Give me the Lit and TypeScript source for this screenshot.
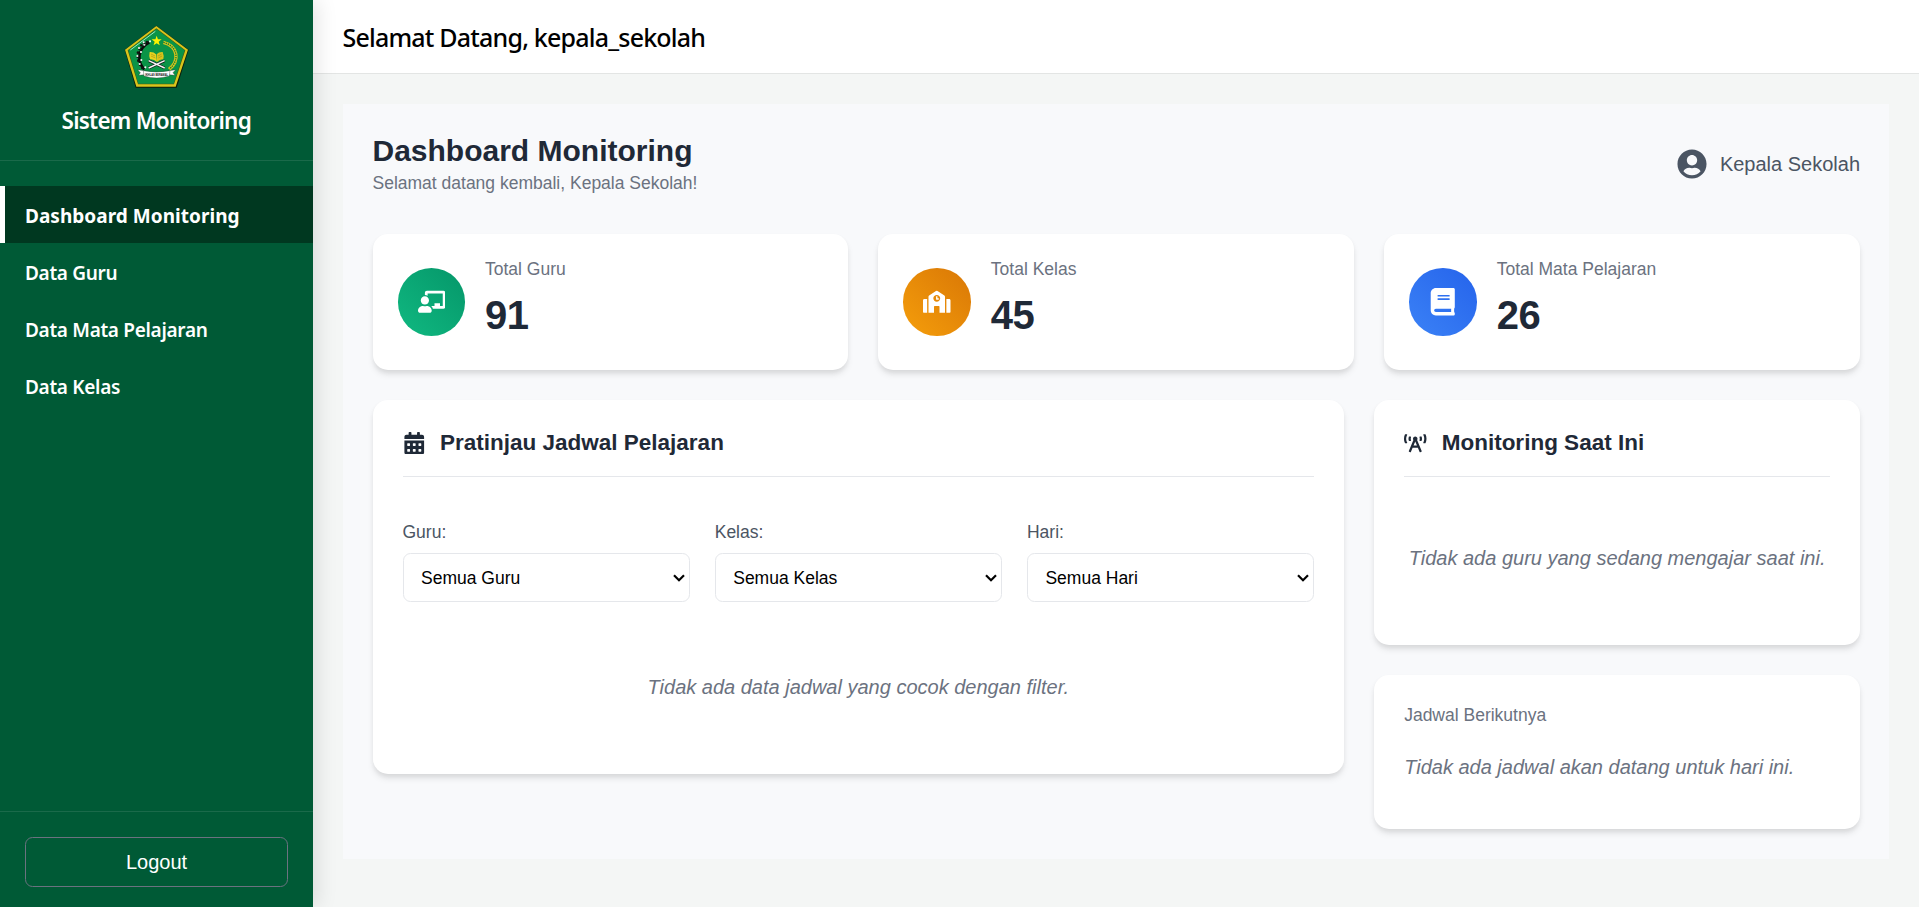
import { LitElement, html, css, svg } from "lit";
import { customElement, state } from "lit/decorators.js";

const ICONS = {
  teacher: {
    box: "0 0 640 512",
    d: "M208 352c-2.39 0-4.78.35-7.06 1.09C187.98 357.3 174.35 360 160 360c-14.35 0-27.98-2.7-40.95-6.91-2.28-.74-4.66-1.09-7.05-1.09C49.94 352-.33 402.48 0 464.62.14 490.88 21.73 512 48 512h224c26.27 0 47.86-21.12 48-47.38.33-62.14-49.94-112.62-112-112.62zm-48-32c53.02 0 96-42.98 96-96s-42.98-96-96-96-96 42.98-96 96 42.98 96 96 96zM592 0H208c-26.47 0-48 22.25-48 49.59V96c23.42 0 45.1 6.78 64 17.8V64h352v288h-64v-64H384v64h-76.24c19.1 16.69 33.12 38.73 39.69 64H592c26.47 0 48-22.25 48-49.59V49.59C640 22.25 618.47 0 592 0z",
  },
  school: {
    box: "0 0 640 512",
    d: "M0 224v272c0 8.84 7.16 16 16 16h80V192H32c-17.67 0-32 14.33-32 32zm360-48h-24v-40c0-4.42-3.58-8-8-8h-16c-4.42 0-8 3.58-8 8v64c0 4.42 3.58 8 8 8h48c4.42 0 8-3.58 8-8v-16c0-4.42-3.58-8-8-8zm137.75-63.96l-160-106.67a32.02 32.02 0 0 0-35.5 0l-160 106.67A32.002 32.002 0 0 0 128 138.66V512h128V368c0-8.84 7.16-16 16-16h96c8.84 0 16 7.16 16 16v144h128V138.67c0-10.7-5.35-20.7-14.25-26.63zM320 256c-44.18 0-80-35.82-80-80s35.82-80 80-80 80 35.82 80 80-35.82 80-80 80zm288-64h-64v320h80c8.84 0 16-7.16 16-16V224c0-17.67-14.33-32-32-32z",
  },
  book: {
    box: "0 0 448 512",
    d: "M448 360V24c0-13.3-10.7-24-24-24H96C43 0 0 43 0 96v320c0 53 43 96 96 96h328c13.3 0 24-10.7 24-24v-16c0-7.5-3.5-14.3-8.9-18.7-4.2-15.4-4.2-59.3 0-74.7 5.4-4.3 8.9-11.1 8.9-18.6zM128 134c0-3.3 2.7-6 6-6h212c3.3 0 6 2.7 6 6v20c0 3.3-2.7 6-6 6H134c-3.3 0-6-2.7-6-6v-20zm0 64c0-3.3 2.7-6 6-6h212c3.3 0 6 2.7 6 6v20c0 3.3-2.7 6-6 6H134c-3.3 0-6-2.7-6-6v-20zm253.4 250H96c-17.7 0-32-14.3-32-32 0-17.6 14.4-32 32-32h285.4c-1.9 17.1-1.9 46.9 0 64z",
  },
  calendar: {
    box: "0 0 448 512",
    d: "M0 464c0 26.5 21.5 48 48 48h352c26.5 0 48-21.5 48-48V192H0v272zm320-196c0-6.6 5.4-12 12-12h40c6.6 0 12 5.4 12 12v40c0 6.6-5.4 12-12 12h-40c-6.6 0-12-5.4-12-12v-40zm0 128c0-6.6 5.4-12 12-12h40c6.6 0 12 5.4 12 12v40c0 6.6-5.4 12-12 12h-40c-6.6 0-12-5.4-12-12v-40zM192 268c0-6.6 5.4-12 12-12h40c6.6 0 12 5.4 12 12v40c0 6.6-5.4 12-12 12h-40c-6.6 0-12-5.4-12-12v-40zm0 128c0-6.6 5.4-12 12-12h40c6.6 0 12 5.4 12 12v40c0 6.6-5.4 12-12 12h-40c-6.6 0-12-5.4-12-12v-40zM64 268c0-6.6 5.4-12 12-12h40c6.6 0 12 5.4 12 12v40c0 6.6-5.4 12-12 12H76c-6.6 0-12-5.4-12-12v-40zm0 128c0-6.6 5.4-12 12-12h40c6.6 0 12 5.4 12 12v40c0 6.6-5.4 12-12 12H76c-6.6 0-12-5.4-12-12v-40zM400 64h-48V16c0-8.8-7.2-16-16-16h-32c-8.8 0-16 7.2-16 16v48H160V16c0-8.8-7.2-16-16-16h-32c-8.8 0-16 7.2-16 16v48H48C21.5 64 0 85.5 0 112v48h448v-48c0-26.5-21.5-48-48-48z",
  },
  tower: {
    box: "0 0 640 512",
    d: "M150.94 192h33.73c11.01 0 18.61-10.83 14.86-21.18-4.93-13.58-7.55-27.98-7.55-42.82s2.62-29.24 7.55-42.82C203.29 74.83 195.68 64 184.67 64h-33.73c-7.01 0-13.46 4.49-15.41 11.23C130.64 92.21 128 109.88 128 128c0 18.12 2.64 35.79 7.54 52.76 1.94 6.74 8.39 11.24 15.4 11.24zM89.92 23.34C95.56 12.72 87.97 0 75.96 0H40.63c-6.27 0-12.14 3.59-14.74 9.31C9.4 45.54 0 85.65 0 128c0 24.75 3.12 68.33 26.69 118.86 2.62 5.63 8.42 9.14 14.61 9.14h34.84c12.02 0 19.61-12.74 13.95-23.37-49.78-93.32-16.71-178.15-.17-209.29zM614.06 9.29C611.46 3.58 605.6 0 599.33 0h-35.42c-11.98 0-19.66 12.66-14.02 23.25 18.27 34.29 48.42 119.42.28 209.23-5.72 10.68 1.8 23.52 13.91 23.52h35.23c6.27 0 12.13-3.58 14.73-9.29C630.57 210.48 640 170.36 640 128s-9.42-82.48-25.94-118.71zM489.06 64h-33.73c-11.01 0-18.61 10.83-14.86 21.18 4.93 13.58 7.55 27.98 7.55 42.82s-2.62 29.24-7.55 42.82c-3.76 10.35 3.85 21.18 14.86 21.18h33.73c7.02 0 13.46-4.49 15.41-11.24 4.9-16.97 7.53-34.64 7.53-52.76 0-18.12-2.64-35.79-7.54-52.76-1.94-6.75-8.39-11.24-15.4-11.24zm-116.3 100.12c7.05-10.29 11.2-22.71 11.2-36.12 0-35.35-28.63-64-63.96-64-35.32 0-63.96 28.65-63.96 64 0 13.41 4.15 25.83 11.2 36.12l-130.5 313.41c-3.4 8.15.46 17.52 8.61 20.92l29.51 12.31c8.15 3.4 17.52-.46 20.91-8.61L244.96 384h150.07l49.2 118.15c3.4 8.16 12.76 12.01 20.91 8.61l29.51-12.31c8.15-3.4 12-12.77 8.61-20.92l-130.5-313.41zM271.62 320L320 203.81 368.38 320h-96.76z",
  },
  user: {
    box: "0 0 496 512",
    d: "M248 8C111 8 0 119 0 256s111 248 248 248 248-111 248-248S385 8 248 8zm0 96c48.6 0 88 39.4 88 88s-39.4 88-88 88-88-39.4-88-88 39.4-88 88-88zm0 344c-58.7 0-111.3-26.6-146.5-68.2 18.8-35.4 55.6-59.8 98.5-59.8 2.4 0 4.8.4 7.1 1.1 13 4.2 26.6 6.9 40.9 6.9 14.3 0 28-2.7 40.9-6.9 2.3-.7 4.7-1.1 7.1-1.1 42.9 0 79.7 24.4 98.5 59.8C359.3 421.4 306.7 448 248 448z",
  },
};

type IconName = keyof typeof ICONS;

const icon = (name: IconName) => html`
  <svg class="icon" viewBox=${ICONS[name].box} aria-hidden="true"><path d=${ICONS[name].d} /></svg>
`;

// Cotton buds that run up the left side of the emblem.
const COTTON = [
  [131, 172], [124, 162], [119, 150], [117, 138], [118, 126], [122, 114], [128, 104], [136, 97], [145, 94],
];

const emblem = () => html`
  <svg class="emblem" viewBox="70 43 196 192" role="img" aria-label="Logo">
    <polygon points="169,45 266,117 230,231 107,231 74,117" fill="#0c1c08" />
    <polygon points="169,46 264,117 227,228 109,228 75,117" fill="#d9c51c" />
    <polygon points="169,53 256,119 222,221 114,221 83,119" fill="#4d5a10" />
    <polygon points="169,55 254,119 221,219 115,219 85,119" fill="#0a9447" />
    <path d="M91 118L166 62" stroke="#9fe8c4" stroke-width="3" fill="none" />
    <path d="M133 176C112 155 110 115 148 95" stroke="#0a0a0a" stroke-width="8" fill="none" />
    ${COTTON.map(
      ([x, y], i) => svg`
        <circle cx=${x - 4} cy=${y} r="4" fill="#111" />
        <circle cx=${x + 5 - (i % 2) * 10} cy=${y - 2} r="3.2" fill="#f4f4f4" />`
    )}
    <path d="M190 95C234 106 240 150 207 176" stroke="#d8c41c" stroke-width="10" fill="none" />
    <path d="M190 95C234 106 240 150 207 176" stroke="#0f7a35" stroke-width="4" stroke-dasharray="4 3" fill="none" />
    <polygon points="170,75 173.8,86 185,86 176,93 179.3,104 170,97.500 160.700,104 164,93 155,86 166.200,86" fill="#fff200" />
    <path d="M146 150L194 172M194 150L146 172" stroke="#111" stroke-width="8" />
    <path d="M146 150L194 172M194 150L146 172" stroke="#f5f5f5" stroke-width="4.500" />
    <path d="M149 124Q161 123 168 131L171 154Q162 145 150 146Q146 136 149 124Z" fill="#e6d21e" />
    <path d="M188 124Q177 123 170 131L171 154Q180 145 190 146Q193 136 188 124Z" fill="#d8c31a" />
    <path d="M153 130L165 136M153 136L166 142M185 130L174 136M186 136L175 142" stroke="#8d8412" stroke-width="1.500" />
    <path d="M113 177L133 180V192L116 194L121 186ZM227 177L207 180V192L225 194L219 186Z" fill="#fff" stroke="#222" stroke-width="1" />
    <path d="M130 180Q170 188 210 180L208 196Q170 208 132 196Z" fill="#fff" stroke="#222" stroke-width="1" />
    <text class="motto" x="170" y="197" text-anchor="middle" textLength="68" lengthAdjust="spacingAndGlyphs">IKHLAS BERAMAL</text>
  </svg>
`;

interface Stat {
  label: string;
  value: number;
  icon: IconName;
  tone: string;
}

@customElement("app-root")
export class AppRoot extends LitElement {
  @state() private active = "Dashboard Monitoring";

  private menu = ["Dashboard Monitoring", "Data Guru", "Data Mata Pelajaran", "Data Kelas"];

  private stats: Stat[] = [
    { label: "Total Guru", value: 91, icon: "teacher", tone: "green" },
    { label: "Total Kelas", value: 45, icon: "school", tone: "amber" },
    { label: "Total Mata Pelajaran", value: 26, icon: "book", tone: "blue" },
  ];

  private filters = [
    { label: "Guru:", all: "Semua Guru" },
    { label: "Kelas:", all: "Semua Kelas" },
    { label: "Hari:", all: "Semua Hari" },
  ];

  static styles = css`
    :host {
      display: grid;
      grid-template-columns: 312.500px minmax(0, 1fr);
      height: 100vh;
      overflow: hidden;
      background: #f4f6f5;
      font-family: "Liberation Sans", Arial, sans-serif;
      font-size: 20px;
      color: #1f2937;
    }
    * { box-sizing: border-box; margin: 0; }
    .icon { display: block; width: 1em; height: 1em; fill: currentColor; flex: none; }

    .sidebar {
      display: flex;
      flex-direction: column;
      background: #005a36;
      color: #fff;
      box-shadow: 5px 0 19px rgba(0, 0, 0, 0.1);
      z-index: 1;
    }
    .brand {
      display: flex;
      flex-direction: column;
      align-items: center;
      height: 161px;
      padding-top: 25px;
      border-bottom: 1px solid rgba(255, 255, 255, 0.1);
    }
    .emblem { display: block; width: 66px; height: 64px; }
    .motto { font: bold 10px "Liberation Sans", sans-serif; fill: #111; }
    .brand-name {
      margin-top: 17px;
      font: 600 22.5px/30px "Noto Sans", sans-serif;
      letter-spacing: -0.78px;
      white-space: nowrap;
    }
    .nav { flex: 1; padding-top: 25px; }
    .nav-item {
      display: block;
      height: 57px;
      padding-left: 20px;
      border-left: 5px solid transparent;
      color: #fff;
      text-decoration: none;
      font: 600 19px/60px "Noto Sans", sans-serif;
      letter-spacing: -0.3px;
      white-space: nowrap;
    }
    .nav-item.on { background: #003820; border-left-color: #fff; font-weight: 700; letter-spacing: 0.03px; }
    .foot { padding: 25px 25px 20px; border-top: 1px solid rgba(255, 255, 255, 0.1); }
    .logout {
      display: block;
      width: 263px;
      height: 50px;
      border: 1px solid #6b7280;
      border-radius: 7.5px;
      background: transparent;
      color: #fff;
      font: 20px/48px "Liberation Sans", sans-serif;
      padding: 0;
    }

    .main { display: flex; flex-direction: column; }
    .topbar {
      height: 74px;
      padding-left: 30px;
      background: #fff;
      border-bottom: 1px solid #e3e5e4;
      color: #000;
      font: 500 25px/75px "Noto Sans", sans-serif;
      letter-spacing: -0.8px;
    }
    .panel {
      margin: 30px 30px 0 30px;
      padding: 30px 29px 30px 30px;
      height: 755px;
      background: #f8f9fb;
    }
    .head { display: flex; justify-content: space-between; height: 100px; }
    .title { font-size: 30px; line-height: 34px; font-weight: 700; }
    .sub { margin-top: 5px; font-size: 17.500px; line-height: 20px; color: #6b7280; }
    .who { display: flex; align-items: center; gap: 12.500px; height: 60px; color: #4b5563; }
    .who .icon { width: 30px; height: 30px; }

    .card {
      background: #fff;
      border-radius: 15px;
      box-shadow: 0 5px 7.500px -1.250px rgba(0, 0, 0, 0.1), 0 2.500px 5px -1.250px rgba(0, 0, 0, 0.06);
    }
    .stats { display: grid; grid-template-columns: repeat(3, minmax(0, 1fr)); gap: 30px; }
    .stat { display: flex; align-items: center; gap: 20px; height: 136px; padding: 0 25px; }
    .disc {
      display: grid;
      place-items: center;
      width: 67.500px;
      height: 67.500px;
      border-radius: 50%;
      color: #fff;
      font-size: 27.500px;
    }
    .green { background: linear-gradient(45deg, #10b981, #059669); }
    .amber { background: linear-gradient(45deg, #f59e0b, #d97706); }
    .blue { background: linear-gradient(45deg, #3b82f6, #2563eb); }
    .stat-text { height: 86px; }
    .stat-label { font-size: 17.500px; line-height: 20px; color: #6b7280; }
    .stat-value { margin-top: 13px; font-size: 40px; line-height: 46px; font-weight: 700; letter-spacing: -0.5px; }

    .lower {
      display: grid;
      grid-template-columns: minmax(0, 2fr) minmax(0, 1fr);
      gap: 30px;
      align-items: start;
      margin-top: 30px;
    }
    .side { display: grid; gap: 30px; }
    .block { padding: 30px; }
    .schedule { height: 374px; }
    .now { height: 245px; }
    .next { height: 154px; }
    .block-head {
      display: flex;
      align-items: center;
      gap: 15px;
      height: 47px;
      padding-bottom: 20px;
      border-bottom: 1px solid #e5e7eb;
      font-size: 22.500px;
      line-height: 26px;
      font-weight: 700;
    }
    .block-head span { padding-bottom: 1px; }
    .filters { display: grid; grid-template-columns: repeat(3, minmax(0, 1fr)); gap: 25px; margin-top: 45px; }
    .filter { display: grid; gap: 11px; font-size: 17.500px; line-height: 20px; color: #4b5563; }
    .pick { display: grid; align-items: center; }
    .pick > * { grid-area: 1 / 1; }
    .select {
      appearance: none;
      width: 100%;
      height: 49px;
      padding: 0 17.500px;
      border: 1px solid #e5e7eb;
      border-radius: 7.500px;
      background: #fff;
      color: #000;
      font: 17.500px "Liberation Sans", sans-serif;
    }
    .chev {
      justify-self: end;
      width: 12px;
      height: 8px;
      margin-right: 5px;
      fill: none;
      stroke: #000;
      stroke-width: 2.200;
      pointer-events: none;
    }
    .empty { font-style: italic; line-height: 23px; color: #6b7280; white-space: nowrap; }
    .schedule .empty { margin-top: 74px; text-align: center; }
    .now .empty { margin-top: 70px; text-align: center; }
    .next .empty { margin-top: 31px; }
    .next-label { font-size: 17.500px; line-height: 20px; color: #6b7280; }
  `;

  render() {
    return html`
      <aside class="sidebar">
        <div class="brand">
          ${emblem()}
          <div class="brand-name">Sistem Monitoring</div>
        </div>
        <nav class="nav">
          ${this.menu.map(
            (m) => html`<a class="nav-item ${m === this.active ? "on" : ""}" @click=${() => (this.active = m)}>${m}</a>`
          )}
        </nav>
        <div class="foot"><button class="logout">Logout</button></div>
      </aside>
      <main class="main">
        <header class="topbar"><span>Selamat Datang, kepala_sekolah</span></header>
        <section class="panel">
          <div class="head">
            <div>
              <h1 class="title">Dashboard Monitoring</h1>
              <p class="sub">Selamat datang kembali, Kepala Sekolah!</p>
            </div>
            <div class="who">${icon("user")}<span>Kepala Sekolah</span></div>
          </div>
          <div class="stats">
            ${this.stats.map(
              (s) => html`
                <div class="card stat">
                  <div class="disc ${s.tone}">${icon(s.icon)}</div>
                  <div class="stat-text">
                    <div class="stat-label">${s.label}</div>
                    <div class="stat-value">${s.value}</div>
                  </div>
                </div>
              `
            )}
          </div>
          <div class="lower">
            <div class="card block schedule">
              <h2 class="block-head">${icon("calendar")}<span>Pratinjau Jadwal Pelajaran</span></h2>
              <div class="filters">
                ${this.filters.map(
                  (f) => html`
                    <label class="filter">
                      <span>${f.label}</span>
                      <span class="pick">
                        <select class="select"><option>${f.all}</option></select>
                        <svg class="chev" viewBox="0 0 12 8"><path d="M1 1.300L6 6.300L11 1.300" /></svg>
                      </span>
                    </label>
                  `
                )}
              </div>
              <p class="empty">Tidak ada data jadwal yang cocok dengan filter.</p>
            </div>
            <div class="side">
              <div class="card block now">
                <h2 class="block-head">${icon("tower")}<span>Monitoring Saat Ini</span></h2>
                <p class="empty">Tidak ada guru yang sedang mengajar saat ini.</p>
              </div>
              <div class="card block next">
                <p class="next-label">Jadwal Berikutnya</p>
                <p class="empty">Tidak ada jadwal akan datang untuk hari ini.</p>
              </div>
            </div>
          </div>
        </section>
      </main>
    `;
  }
}
